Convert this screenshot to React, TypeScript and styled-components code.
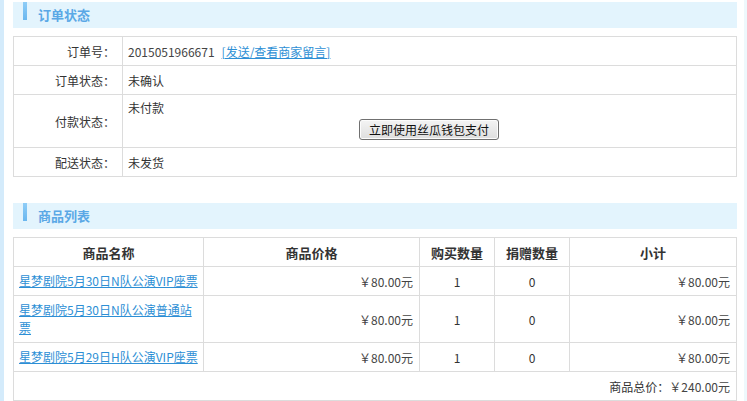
import React from "react";
import styled, { createGlobalStyle } from "styled-components";

const GlobalStyle = createGlobalStyle`
  html, body {
    margin: 0;
    padding: 0;
    background: #fff;
  }
  body {
    font-family: "Noto Sans CJK SC", "Liberation Sans", sans-serif;
    font-size: 12px;
    color: #333;
  }
`;

const Page = styled.div`
  width: 747px;
  min-height: 401px;
  box-sizing: border-box;
  border-left: 4px solid #d4ebfb;
  border-right: 3px solid #eef8fc;
  padding: 2px 7px 0 9px;
  display: flex;
  flex-direction: column;
`;

const Section = styled.section<{ $gap: number }>`
  margin-bottom: ${(p) => p.$gap}px;
`;

const SectionHead = styled.div`
  height: 26px;
  background: #e3f4fd;
  display: flex;
  align-items: flex-start;
  padding-left: 10px;
  margin-bottom: 8px;
`;

const HeadBar = styled.span`
  width: 4px;
  height: 18px;
  background: linear-gradient(#8fcdf7, #6ab7ef);
  margin-right: 11px;
`;

const HeadTitle = styled.h3`
  margin: 0;
  font-size: 13px;
  font-weight: bold;
  color: #5aa8e6;
  line-height: 26px;
`;

const Table = styled.table`
  width: 724px;
  border-collapse: collapse;
  table-layout: fixed;
  border: 1px solid #dcdcdc;
  td, th {
    border: 1px solid #dcdcdc;
    padding: 0 6px;
    height: 28px;
    vertical-align: middle;
    font-size: 12px;
  }
`;

const LabelCell = styled.td`
  text-align: right;
  padding-right: 7px !important;
`;

const ValueCell = styled.td<{ $top?: boolean }>`
  text-align: left;
  padding-left: 5px !important;
  ${(p) =>
    p.$top
      ? `vertical-align: top !important; padding-top: 4px !important; padding-bottom: 7px !important; height: auto !important;`
      : ""}
`;

const OrderNo = styled.span`
  color: #444;
  margin-right: 7px;
`;

const Link = styled.a`
  color: #2d8fd5;
  text-decoration: underline;
  cursor: pointer;
`;

const PayLine = styled.div`
  line-height: 17px;
`;

const ButtonRow = styled.div`
  text-align: center;
  margin-top: 3px;
`;

const PayButton = styled.button`
  width: 140px;
  height: 21px;
  padding: 0;
  font-family: "Noto Sans CJK SC", sans-serif;
  font-size: 12px;
  color: #111;
  border: 1px solid #707070;
  border-radius: 3px;
  background: linear-gradient(#f4f4f4, #dedede);
  box-shadow: inset 0 0 0 1px #fcfcfc;
  cursor: pointer;
`;

const HeadCell = styled.th`
  font-weight: bold;
  font-size: 13px !important;
  text-align: center;
  color: #333;
`;

const Cell = styled.td<{ $align: "left" | "right" | "center" }>`
  text-align: ${(p) => p.$align};
  line-height: 17px;
`;

const NameCell = styled(Cell)`
  padding: 5px 2px 5px 5px !important;
  height: 18px !important;
  line-height: 18px;
`;

const Money = styled.span`
  color: #444;
`;

type Item = { name: string; price: string; qty: number; gift: number; sub: string };

const items: Item[] = [
  { name: "星梦剧院5月30日N队公演VIP座票", price: "￥80.00元", qty: 1, gift: 0, sub: "￥80.00元" },
  { name: "星梦剧院5月30日N队公演普通站票", price: "￥80.00元", qty: 1, gift: 0, sub: "￥80.00元" },
  { name: "星梦剧院5月29日H队公演VIP座票", price: "￥80.00元", qty: 1, gift: 0, sub: "￥80.00元" },
];

export default function App() {
  return (
    <>
      <GlobalStyle />
      <Page>
        <Section $gap={26}>
          <SectionHead>
            <HeadBar />
            <HeadTitle>订单状态</HeadTitle>
          </SectionHead>
          <Table>
            <colgroup>
              <col style={{ width: 109 }} />
              <col />
            </colgroup>
            <tbody>
              <tr>
                <LabelCell>订单号：</LabelCell>
                <ValueCell>
                  <OrderNo>2015051966671</OrderNo>
                  <Link>[发送/查看商家留言]</Link>
                </ValueCell>
              </tr>
              <tr>
                <LabelCell>订单状态：</LabelCell>
                <ValueCell>未确认</ValueCell>
              </tr>
              <tr>
                <LabelCell>付款状态：</LabelCell>
                <ValueCell $top>
                  <PayLine>未付款</PayLine>
                  <ButtonRow>
                    <PayButton>立即使用丝瓜钱包支付</PayButton>
                  </ButtonRow>
                </ValueCell>
              </tr>
              <tr>
                <LabelCell>配送状态：</LabelCell>
                <ValueCell>未发货</ValueCell>
              </tr>
            </tbody>
          </Table>
        </Section>
        <Section $gap={0}>
          <SectionHead>
            <HeadBar />
            <HeadTitle>商品列表</HeadTitle>
          </SectionHead>
          <Table>
            <colgroup>
              <col style={{ width: 190 }} />
              <col style={{ width: 216 }} />
              <col style={{ width: 75 }} />
              <col style={{ width: 75 }} />
              <col />
            </colgroup>
            <thead>
              <tr>
                <HeadCell>商品名称</HeadCell>
                <HeadCell>商品价格</HeadCell>
                <HeadCell>购买数量</HeadCell>
                <HeadCell>捐赠数量</HeadCell>
                <HeadCell>小计</HeadCell>
              </tr>
            </thead>
            <tbody>
              {items.map((it) => (
                <tr key={it.name}>
                  <NameCell $align="left">
                    <Link>{it.name}</Link>
                  </NameCell>
                  <Cell $align="right">
                    <Money>{it.price}</Money>
                  </Cell>
                  <Cell $align="center">{it.qty}</Cell>
                  <Cell $align="center">{it.gift}</Cell>
                  <Cell $align="right">
                    <Money>{it.sub}</Money>
                  </Cell>
                </tr>
              ))}
              <tr>
                <Cell $align="right" colSpan={5}>
                  商品总价：<Money>￥240.00元</Money>
                </Cell>
              </tr>
            </tbody>
          </Table>
        </Section>
      </Page>
    </>
  );
}
